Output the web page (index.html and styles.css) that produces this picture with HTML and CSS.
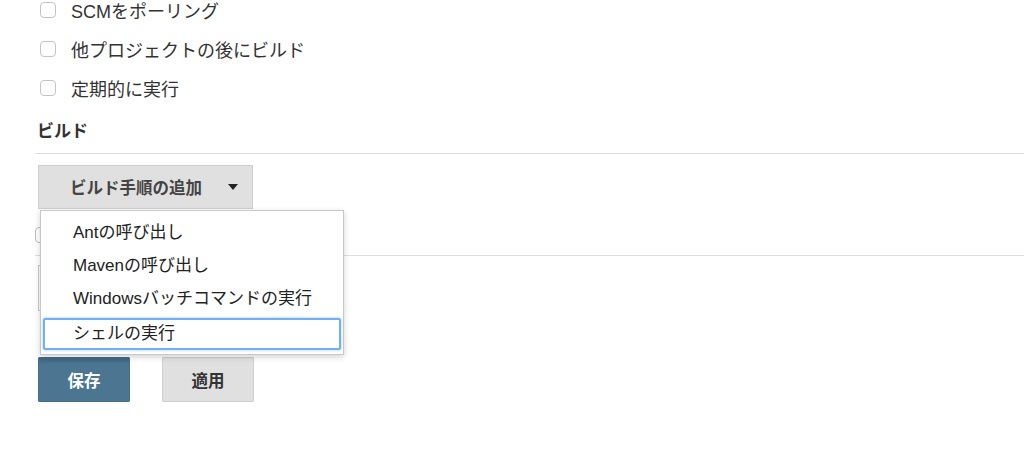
FILE: index.html
```html
<!DOCTYPE html>
<html lang="ja">
<head>
<meta charset="utf-8">
<link rel="stylesheet" href="styles.css">
</head>
<body>
<div class="page">
  <div class="triggers">
    <label class="row"><span class="cb"></span><span class="lbl">SCMをポーリング</span></label>
    <label class="row"><span class="cb"></span><span class="lbl">他プロジェクトの後にビルド</span></label>
    <label class="row"><span class="cb"></span><span class="lbl">定期的に実行</span></label>
  </div>
  <div class="section-head">ビルド</div>
  <div class="build">
    <button class="add-btn"><span class="add-label">ビルド手順の追加</span><span class="caret"></span></button>
    <div class="hidden-area">
      <div class="hidden-row"><span class="cb"></span></div>
      <div class="hidden-sep"></div>
      <div class="hidden-box"></div>
    </div>
    <ul class="menu">
      <li class="item">Antの呼び出し</li>
      <li class="item">Mavenの呼び出し</li>
      <li class="item">Windowsバッチコマンドの実行</li>
      <li class="item focus">シェルの実行</li>
    </ul>
  </div>
  <div class="actions">
    <button class="btn primary">保存</button>
    <button class="btn secondary">適用</button>
  </div>
</div>
</body>
</html>
```

FILE: styles.css
```css
* { box-sizing: border-box; }
html, body { margin: 0; padding: 0; background: #fff; }
body {
  font-family: "Liberation Sans", "Noto Sans CJK JP", sans-serif;
  color: #333;
  font-size: 16px;
  overflow: hidden;
}
.page { padding-left: 35px; }
.triggers { margin-top: -10px; }
.row {
  display: flex;
  align-items: center;
  height: 39px;
  padding-left: 5px;
}
.cb {
  width: 16px;
  height: 16px;
  border: 1px solid #c4c4c4;
  border-radius: 4px;
  background: #fff;
  flex: none;
}
.lbl { margin-left: 15px; color: #333; font-size: 18px; }
.section-head {
  margin-top: 0;
  padding: 13px 0 9px 2px;
  line-height: 24px;
  font-size: 17px;
  font-weight: bold;
  color: #333;
  border-bottom: 1px solid #dedede;
}
.build { position: relative; }
.add-btn {
  display: flex;
  align-items: center;
  margin: 11px 0 0 3px;
  width: 215px;
  height: 44px;
  padding: 0 0 0 31px;
  background: #e0e0e0;
  border: 1px solid #cfcfcf;
  font-family: inherit;
  font-size: 16.5px;
  font-weight: bold;
  color: #444;
}
.caret {
  margin-left: 26px;
  width: 0;
  height: 0;
  border-left: 5px solid transparent;
  border-right: 5px solid transparent;
  border-top: 6px solid #222;
}
.hidden-area { height: 148px; }
.hidden-row { height: 36px; padding: 18px 0 0 0; }
.hidden-row .cb { display: block; border-color: #bbb; }
.hidden-sep { margin-top: 10px; border-top: 1px solid #dedede; }
.hidden-box {
  margin: 9px 0 0 3px;
  width: 300px;
  height: 46px;
  border: 1px solid #ccc;
}
.menu {
  position: absolute;
  left: 5px;
  top: 45px;
  width: 304px;
  height: 145px;
  margin: 0;
  padding: 5px 2px 0 2px;
  list-style: none;
  background: #fff;
  border: 1px solid #c8c8c8;
  box-shadow: 0 2px 6px rgba(0,0,0,0.18);
}
.item {
  height: 33px;
  line-height: 33px;
  padding-left: 30px;
  color: #222;
  font-size: 17px;
}
.item.focus {
  margin-top: 3px;
  height: 32px;
  line-height: 28px;
  padding-left: 28px;
  border: 2px solid #6fb0f7;
  border-radius: 2px;
  box-shadow: 0 0 3px #9cc8fa;
}
.actions {
  display: flex;
  gap: 32px;
  padding-left: 3px;
}
.btn {
  width: 92px;
  height: 45px;
  font-family: inherit;
  font-size: 16.5px;
  font-weight: bold;
  border-radius: 1px;
}
.primary {
  color: #fff;
  background: linear-gradient(#3e6780 0, #4b7590 6px, #4b7590 100%);
  border: 1px solid #44718c;
}
.secondary {
  color: #333;
  background: #e0e0e0;
  border: 1px solid #d0d0d0;
}
```
